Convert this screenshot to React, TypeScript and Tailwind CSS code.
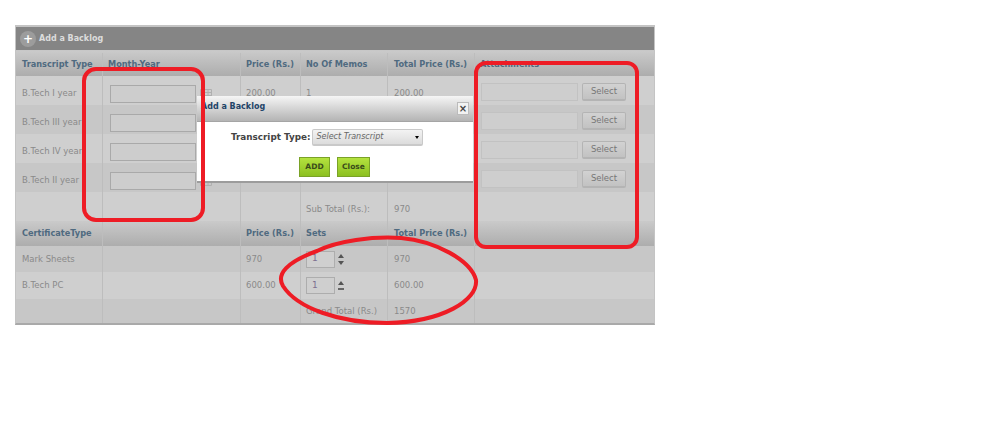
import { ReactNode } from "react";

const font = { fontFamily: '"DejaVu Sans", sans-serif' };

function Cells({ children, rowClass, low }: { children: ReactNode[]; rowClass: string; low?: boolean }) {
  const widths = ["w-[87px] pl-[6px]", "w-[138px] pl-[5px]", "w-[60px] pl-[5px]", "w-[87px] pl-[5px]", "w-[87px] pl-[6px]", "flex-1 pl-[5px]"];
  return (
    <div className={`flex ${rowClass}`}>
      {children.map((c, i) => (
        <div
          key={i}
          className={`${widths[i]} ${low ? (i < 5 ? "pt-[6px]" : "pt-[2px]") : ""} flex items-center border-r border-[#bdbdbd] last:border-r-0`}
        >
          {c}
        </div>
      ))}
    </div>
  );
}

function Head({ children }: { children: ReactNode }) {
  return <span className="text-[8.2px] font-bold text-[#4f6a80] whitespace-nowrap">{children}</span>;
}

function Val({ children }: { children: ReactNode }) {
  return <span className="text-[8.5px] text-[#8a8a8a] whitespace-nowrap">{children}</span>;
}

function Attach() {
  return (
    <div className="flex items-center gap-[4px] pl-px">
      <div className="w-[97px] h-[18px] bg-[#cecece] border border-[#c2c2c2]" />
      <div className="w-[44px] h-[18px] flex items-center justify-center rounded-[2px] bg-gradient-to-b from-[#d2d2d2] to-[#c2c2c2] border border-[#b4b4b4] border-b-2 text-[8.5px] text-[#777]">
        Select
      </div>
    </div>
  );
}

function DateInput() {
  return (
    <div className="flex items-center gap-[4px] pl-[2px]">
      <div className="w-[86px] h-[18px] bg-[#cdcdcd] border border-[#a9a9a9]" />
      <svg width="12" height="10" viewBox="0 0 12 10" fill="none" stroke="#b0b0b0">
        <path d="M.5.5h11v9H.5zM.5 3.5h11M4 .5v9M8 .5v9M.5 6.5h11" />
      </svg>
    </div>
  );
}

function Sets({ dark }: { dark?: boolean }) {
  return (
    <div className="flex items-center gap-[3px]">
      <div className="w-[29px] h-[17px] pl-[5px] flex items-center bg-[#cfcfcf] border border-[#adadad] text-[9px] text-[#7d6f90]">1</div>
      <div className="flex flex-col items-center gap-[3px]">
        <div className="w-0 h-0 border-x-[3px] border-x-transparent border-b-[4px] border-b-[#555]" />
        {dark ? (
          <div className="w-0 h-0 border-x-[3px] border-x-transparent border-t-[4px] border-t-[#555]" />
        ) : (
          <div className="w-[6px] h-[2px] bg-[#666]" />
        )}
      </div>
    </div>
  );
}

const headRow = "bg-gradient-to-b from-[#cacaca] to-[#adadad]";
const light = "bg-[#cfcfcf]";
const dim = "bg-[#c7c7c7]";

export default function App() {
  return (
    <div className="relative w-[986px] h-[437px] bg-white overflow-hidden" style={font}>
      <div className="ml-[15px] pt-[25px] w-[640px]">
        <div className="border-t-2 border-[#c4c4c4] border-x border-x-[#c4c4c4] border-b-2 border-b-[#a9a9a9] bg-[#c8c8c8] h-[300px]">
          <div className="h-[23px] bg-[#858585] flex items-center gap-[3px] pl-[4px]">
            <div className="w-[16px] h-[16px] rounded-full bg-[#9c9c9c] flex items-center justify-center text-white font-bold text-[12px] leading-none">+</div>
            <span className="text-[8px] font-bold text-[#dcdcdc]">Add a Backlog</span>
          </div>
          <Cells rowClass={`${headRow} h-[25px] mt-px pt-[2px]`}>
            {[<Head>Transcript Type</Head>, <Head>Month-Year</Head>, <Head>Price (Rs.)</Head>, <Head>No Of Memos</Head>, <Head>Total Price (Rs.)</Head>, <Head>Attachments</Head>]}
          </Cells>
          <Cells low rowClass={`h-[29px] ${light}`}>
            {[<Val>B.Tech I year</Val>, <DateInput />, <Val>200.00</Val>, <Val>1</Val>, <Val>200.00</Val>, <Attach />]}
          </Cells>
          <Cells low rowClass={`h-[29px] ${dim}`}>
            {[<Val>B.Tech III year</Val>, <DateInput />, <Val>250.00</Val>, <Val>1</Val>, <Val>250.00</Val>, <Attach />]}
          </Cells>
          <Cells low rowClass={`h-[29px] ${light}`}>
            {[<Val>B.Tech IV year</Val>, <DateInput />, <Val>270.00</Val>, <Val>1</Val>, <Val>270.00</Val>, <Attach />]}
          </Cells>
          <Cells low rowClass={`h-[29px] ${dim}`}>
            {[<Val>B.Tech II year</Val>, <DateInput />, <Val>250.00</Val>, <Val>1</Val>, <Val>250.00</Val>, <Attach />]}
          </Cells>
          <Cells low rowClass={`h-[29px] ${light}`}>
            {[<span />, <span />, <span />, <Val>Sub Total (Rs.):</Val>, <Val>970</Val>, <span />]}
          </Cells>
          <Cells rowClass={`${headRow} h-[25px]`}>
            {[<Head>CertificateType</Head>, <span />, <Head>Price (Rs.)</Head>, <Head>Sets</Head>, <Head>Total Price (Rs.)</Head>, <span />]}
          </Cells>
          <Cells rowClass={`h-[26px] ${dim}`}>
            {[<Val>Mark Sheets</Val>, <span />, <Val>970</Val>, <Sets dark />, <Val>970</Val>, <span />]}
          </Cells>
          <Cells rowClass={`h-[27px] ${light}`}>
            {[<Val>B.Tech PC</Val>, <span />, <Val>600.00</Val>, <Sets />, <Val>600.00</Val>, <span />]}
          </Cells>
          <Cells rowClass={`h-[24px] ${dim}`}>
            {[<span />, <span />, <span />, <Val>Grand Total (Rs.)</Val>, <Val>1570</Val>, <span />]}
          </Cells>
        </div>
      </div>

      {/* popup */}
      <div className="absolute left-[197px] top-[96px] w-[276px] h-[87px] bg-white border-b-2 border-[#9c9c9c] flex flex-col">
        <div className="h-[26px] bg-gradient-to-b from-[#f6f6f6] to-[#b4b4b4] border-b border-[#a5a5a5] flex items-center justify-between pl-[4px] pr-[4px]">
          <span className="text-[8px] font-bold text-[#1f4468] -mt-[3px]">Add a Backlog</span>
          <div className="w-[12px] h-[13px] bg-[#f2f2f2] border border-[#bbb] flex items-center justify-center text-[10px] font-bold leading-none text-[#444]">×</div>
        </div>
        <div className="flex items-center gap-[2px] pl-[34px] pt-[7px]">
          <span className="text-[8.8px] font-bold text-[#444]">Transcript Type:</span>
          <div className="w-[111px] h-[17px] rounded-[2px] bg-gradient-to-b from-[#f3f3f3] to-[#dcdcdc] border border-[#c9c9c9] border-b-2 flex items-center justify-between px-[3px]">
            <span className="text-[8px] italic text-[#666]">Select Transcript</span>
            <div className="w-0 h-0 border-x-[2.5px] border-x-transparent border-t-[3px] border-t-black" />
          </div>
        </div>
        <div className="flex gap-[7px] pl-[102px] pt-[11px]">
          <div className="w-[31px] h-[20px] bg-gradient-to-b from-[#b4e23e] to-[#8cc020] border border-[#7aa227] flex items-center justify-center text-[7.5px] font-bold text-[#3a4a1a]">ADD</div>
          <div className="w-[33px] h-[20px] bg-gradient-to-b from-[#b4e23e] to-[#8cc020] border border-[#7aa227] flex items-center justify-center text-[7.5px] font-bold text-[#3a4a1a]">Close</div>
        </div>
      </div>

      {/* red annotation marks */}
      <div className="absolute left-[82px] top-[67px] w-[123px] h-[155px] border-[4px] border-[#ee1c25] rounded-[14px]" />
      <div className="absolute left-[474px] top-[61px] w-[165px] h-[188px] border-[4px] border-[#ee1c25] rounded-[12px]" />
      <svg className="absolute left-[275px] top-[232px]" width="206" height="95" viewBox="0 0 206 95" fill="none">
        <path
          d="M42 19 C62 9 98 4 126 6 C160 9 196 28 201 48 C203 68 168 90 112 91 C64 91 22 76 8 54 C1 42 12 30 42 19 Z"
          stroke="#ee1c25"
          strokeWidth="4"
        />
      </svg>
    </div>
  );
}
